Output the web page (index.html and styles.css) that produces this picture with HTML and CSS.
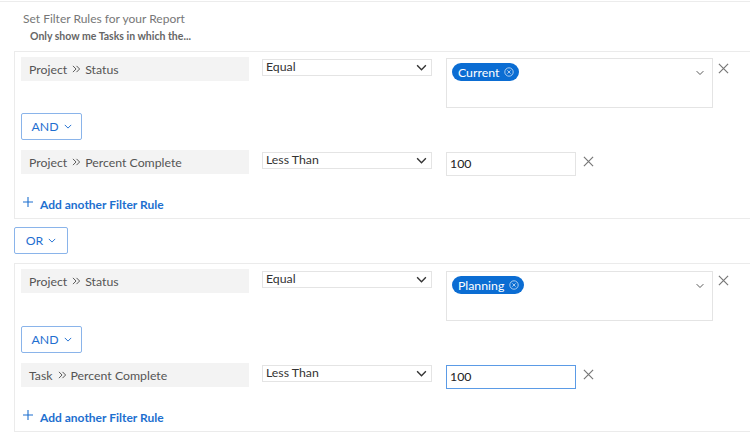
FILE: index.html
```html
<!DOCTYPE html>
<html lang="en">
<head>
    <meta charset="UTF-8">
    <title>Set Filter Rules</title>
    <link rel="stylesheet" href="styles.css">
</head>
<body>
    <div class="page">
        <h1 class="title">Set Filter Rules for your Report</h1>
        <p class="subtitle">Only show me Tasks in which the...</p>

        <section class="group">
            <div class="rule">
                <div class="field">Project <svg class="sep" viewBox="0 0 10 9"><path d="M1 1l3.5 3.5L1 8M5 1l3.5 3.5L5 8"/></svg> Status</div>
                <div class="select">Equal<svg class="chev" viewBox="0 0 12 8"><path d="M1 1.5l5 5 5-5"/></svg></div>
                <div class="multi">
                    <span class="tag">Current <svg class="tag-x" viewBox="0 0 10 10"><circle cx="5" cy="5" r="4.2"/><path d="M3.4 3.4l3.2 3.2M6.6 3.4l-3.2 3.2"/></svg></span>
                    <svg class="multi-chev" viewBox="0 0 12 8"><path d="M1.5 1.5l4.5 4.5 4.5-4.5"/></svg>
                </div>
                <svg class="remove" viewBox="0 0 12 12"><path d="M1 1l10 10M11 1L1 11"/></svg>
            </div>
            <button class="conj conj-and">AND <svg viewBox="0 0 10 6"><path d="M1 1l4 4 4-4"/></svg></button>
            <div class="rule">
                <div class="field">Project <svg class="sep" viewBox="0 0 10 9"><path d="M1 1l3.5 3.5L1 8M5 1l3.5 3.5L5 8"/></svg> Percent Complete</div>
                <div class="select">Less Than<svg class="chev" viewBox="0 0 12 8"><path d="M1 1.5l5 5 5-5"/></svg></div>
                <div class="input">100</div>
                <svg class="remove" viewBox="0 0 12 12"><path d="M1 1l10 10M11 1L1 11"/></svg>
            </div>
            <a class="add-rule" href="#"><svg class="plus" viewBox="0 0 10 10"><path d="M5 0v10M0 5h10"/></svg>Add another Filter Rule</a>
        </section>

        <button class="conj conj-or">OR <svg viewBox="0 0 10 6"><path d="M1 1l4 4 4-4"/></svg></button>

        <section class="group group-second">
            <div class="rule">
                <div class="field">Project <svg class="sep" viewBox="0 0 10 9"><path d="M1 1l3.5 3.5L1 8M5 1l3.5 3.5L5 8"/></svg> Status</div>
                <div class="select">Equal<svg class="chev" viewBox="0 0 12 8"><path d="M1 1.5l5 5 5-5"/></svg></div>
                <div class="multi">
                    <span class="tag">Planning <svg class="tag-x" viewBox="0 0 10 10"><circle cx="5" cy="5" r="4.2"/><path d="M3.4 3.4l3.2 3.2M6.6 3.4l-3.2 3.2"/></svg></span>
                    <svg class="multi-chev" viewBox="0 0 12 8"><path d="M1.5 1.5l4.5 4.5 4.5-4.5"/></svg>
                </div>
                <svg class="remove" viewBox="0 0 12 12"><path d="M1 1l10 10M11 1L1 11"/></svg>
            </div>
            <button class="conj conj-and">AND <svg viewBox="0 0 10 6"><path d="M1 1l4 4 4-4"/></svg></button>
            <div class="rule">
                <div class="field">Task <svg class="sep" viewBox="0 0 10 9"><path d="M1 1l3.5 3.5L1 8M5 1l3.5 3.5L5 8"/></svg> Percent Complete</div>
                <div class="select">Less Than<svg class="chev" viewBox="0 0 12 8"><path d="M1 1.5l5 5 5-5"/></svg></div>
                <div class="input input-focus">100</div>
                <svg class="remove" viewBox="0 0 12 12"><path d="M1 1l10 10M11 1L1 11"/></svg>
            </div>
            <a class="add-rule" href="#"><svg class="plus" viewBox="0 0 10 10"><path d="M5 0v10M0 5h10"/></svg>Add another Filter Rule</a>
        </section>
    </div>
</body>
</html>
```

FILE: styles.css
```css
* {
    margin: 0;
    padding: 0;
    box-sizing: border-box;
}

body {
    font-family: Lato, 'Open Sans', Arial, sans-serif;
    background: white;
    color: #333;
    overflow: hidden;
}

.page {
    border-top: 1px solid #ececec;
    margin-top: 1px;
    padding-top: 9px;
}

.title {
    font-size: 12px;
    font-weight: normal;
    color: #777;
    margin-left: 23px;
    line-height: 16px;
}

.subtitle {
    font-size: 10.5px;
    font-weight: bold;
    color: #666;
    margin-left: 30px;
    margin-top: 2px;
    line-height: 14px;
}

.group {
    margin-left: 14px;
    margin-right: -20px;
    margin-top: 8px;
    border: 1px solid #ebebeb;
    padding: 5px 0 0 6px;
}

.group-second {
    margin-top: 9px;
}

.rule {
    display: flex;
    align-items: flex-start;
}

.field {
    display: flex;
    align-items: center;
    width: 228px;
    height: 24px;
    background: #f3f3f3;
    color: #555;
    font-size: 12.3px;
    padding-left: 8px;
}

.sep {
    width: 9px;
    height: 8px;
    margin: 0 4px 0 5px;
    fill: none;
    stroke: #555;
    stroke-width: 1.1;
}

.select {
    position: relative;
    width: 170px;
    height: 17px;
    margin-left: 13px;
    margin-top: 2px;
    border: 1px solid #e4e4e4;
    font-size: 12.3px;
    line-height: 14px;
    padding-left: 3px;
    color: #333;
}

.chev {
    position: absolute;
    right: 4px;
    top: 4px;
    width: 11px;
    height: 7px;
    fill: none;
    stroke: #333;
    stroke-width: 1.6;
}

.multi {
    position: relative;
    display: flex;
    align-items: flex-start;
    width: 267px;
    height: 50px;
    margin-left: 14px;
    margin-top: 1px;
    border: 1px solid #e4e4e4;
    padding: 4px 0 0 5px;
}

.group-second .multi {
    margin-top: 2px;
}

.tag {
    display: inline-flex;
    align-items: center;
    height: 18px;
    padding: 0 5px 0 6px;
    border-radius: 9px;
    background: #0b6dd3;
    color: white;
    font-size: 12.3px;
}

.tag-x {
    width: 10px;
    height: 10px;
    margin-left: 5px;
    fill: none;
    stroke: #bcd6f3;
    stroke-width: 0.9;
}

.multi-chev {
    position: absolute;
    right: 7px;
    top: 11px;
    width: 10px;
    height: 6px;
    fill: none;
    stroke: #555;
    stroke-width: 1.3;
}

.remove {
    width: 11px;
    height: 11px;
    margin-left: 5px;
    margin-top: 6px;
    fill: none;
    stroke: #777;
    stroke-width: 1.3;
}

.input {
    width: 130px;
    height: 24px;
    margin-left: 14px;
    margin-top: 2px;
    border: 1px solid #e4e4e4;
    font-size: 12.3px;
    line-height: 22px;
    padding-left: 3px;
    color: #222;
}

.input-focus {
    border-color: #5b9be6;
}

.input + .remove {
    margin-left: 7px;
}

.conj {
    display: flex;
    align-items: center;
    justify-content: center;
    gap: 5px;
    height: 27px;
    background: white;
    border: 1px solid #8ab4ea;
    border-radius: 2px;
    color: #1f6fd0;
    font-family: inherit;
    font-size: 12.3px;
}

.conj svg {
    width: 8px;
    height: 5px;
    fill: none;
    stroke: #1f6fd0;
    stroke-width: 1.2;
}

.conj-and {
    width: 61px;
    margin: 5px 0 10px;
}

.conj-or {
    width: 54px;
    margin: 8px 0 0 14px;
}

.add-rule {
    display: flex;
    align-items: flex-start;
    height: 42px;
    padding-top: 21px;
    padding-left: 2px;
    color: #1d6fcf;
    font-size: 12px;
    font-weight: bold;
    text-decoration: none;
}

.plus {
    width: 10px;
    height: 10px;
    margin: 0 7px 0 0;
    fill: none;
    stroke: #1d6fcf;
    stroke-width: 1.1;
}
```
